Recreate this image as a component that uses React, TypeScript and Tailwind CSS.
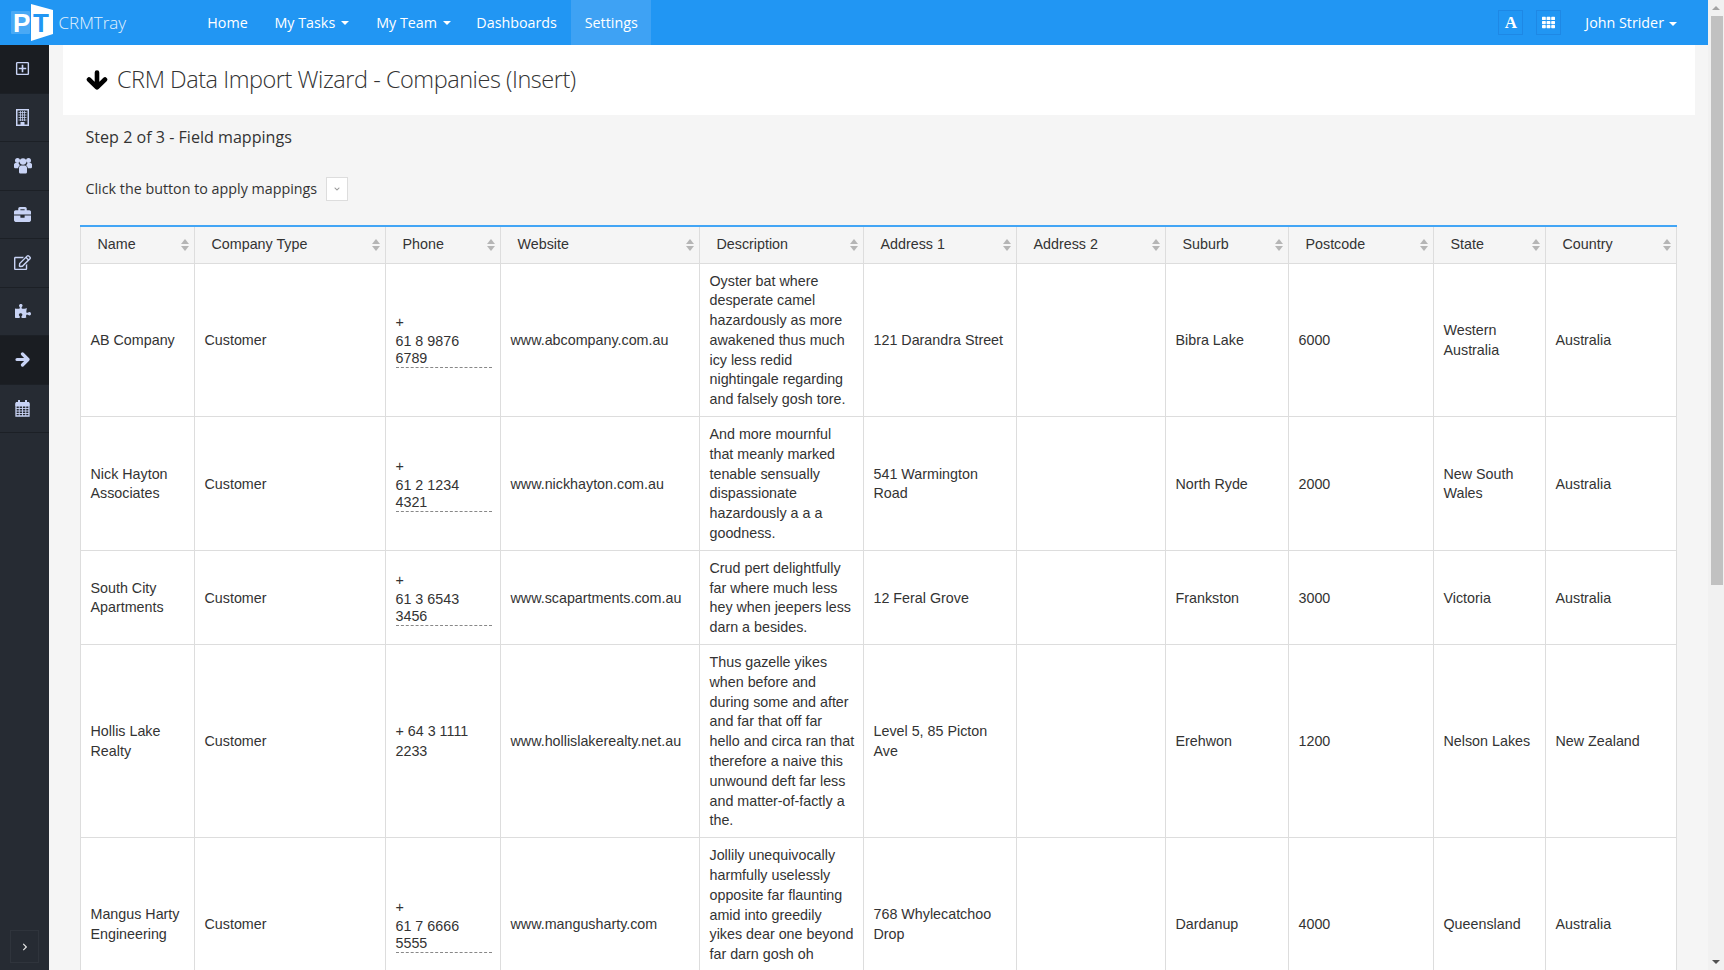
import React from "react";
import {
  FaRegPlusSquare, FaBriefcase, FaRegEdit, FaPuzzlePiece,
  FaChevronRight, FaTh, FaChevronDown,
} from "react-icons/fa";

function BoldArrowDown() {
  return (
    <svg width="22" height="20" viewBox="0 0 22 20" fill="none" stroke="currentColor" strokeWidth="4.6" strokeLinecap="round" strokeLinejoin="round">
      <path d="M11 2.500V16.500M3 9.500L11 17.300L19 9.500" />
    </svg>
  );
}

function BoldArrowRight() {
  return (
    <svg width="15" height="15" viewBox="0 0 15 15" fill="none" stroke="currentColor" strokeWidth="3.200" strokeLinecap="round" strokeLinejoin="round">
      <path d="M2 7.500H12M7.500 2L13 7.500L7.500 13" />
    </svg>
  );
}

function BuildingIcon() {
  return (
    <svg width="13" height="17" viewBox="0 0 13 17" fill="none" stroke="currentColor">
      <rect x="0.75" y="0.75" width="11.5" height="15.5" strokeWidth="1.5" />
      <path d="M2.5 3.5h8M2.5 6h8M2.5 8.500h8M2.500 11h8M4.500 2v10M6.500 2v10M8.500 2v10" strokeWidth="1" strokeOpacity="0.75" />
      <rect x="4.500" y="13" width="4" height="3.500" fill="currentColor" stroke="none" />
    </svg>
  );
}

function UsersIcon() {
  return (
    <svg width="18" height="17" viewBox="0 0 18 17" fill="currentColor">
      <circle cx="3.500" cy="3.500" r="2.500" />
      <circle cx="14.500" cy="3.500" r="2.500" />
      <circle cx="9" cy="4.500" r="3.200" />
      <path d="M0 7.500c0-1 1-1.500 2-1.500h2.500c.3 1 .8 1.800 1.500 2.300-1 .6-1.700 1.700-1.800 3H1.500C.6 11.300 0 10.800 0 10z" />
      <path d="M18 7.500c0-1-1-1.500-2-1.500h-2.500c-.3 1-.8 1.800-1.500 2.300 1 .6 1.700 1.700 1.800 3h2.700c.9 0 1.500-.5 1.500-1.300z" />
      <path d="M5 11c0-1.500 1-2.400 2.200-2.400h3.600c1.200 0 2.200.9 2.200 2.400v4c0 1-.8 1.500-1.700 1.500H6.700C5.800 16.500 5 16 5 15z" />
    </svg>
  );
}

function CalendarIcon() {
  return (
    <svg width="15" height="17" viewBox="0 0 15 17" fill="none" stroke="currentColor">
      <path d="M1 4h13v12H1z" strokeWidth="1.300" />
      <path d="M1 2.500h13V6H1z" fill="currentColor" strokeWidth="1" />
      <path d="M1 8.500h13M1 11h13M1 13.500h13M4.250 6v10M7.500 6v10M10.750 6v10" strokeWidth="0.900" />
      <path d="M4 0.500v3.500M11 0.500v3.500" strokeWidth="2" strokeLinecap="round" />
    </svg>
  );
}

const sideItems = [
  { node: <FaRegPlusSquare size={15} />, dark: true },
  { node: <BuildingIcon />, dark: false },
  { node: <UsersIcon />, dark: false },
  { node: <FaBriefcase size={17} />, dark: false },
  { node: <FaRegEdit size={17} />, dark: false },
  { node: <FaPuzzlePiece size={16} />, dark: false },
  { node: <BoldArrowRight />, dark: true },
  { node: <CalendarIcon />, dark: false },
];

const headers = ["Name", "Company Type", "Phone", "Website", "Description", "Address 1", "Address 2", "Suburb", "Postcode", "State", "Country"];

type Row = {
  name: string; phone: [string, string] | string; site: string; desc: string; a1: string;
  suburb: string; post: string; state: string; country: string;
};

const rows: Row[] = [
  { name: "AB Company", phone: ["61 8 9876", "6789"], site: "www.abcompany.com.au",
    desc: "Oyster bat where desperate camel hazardously as more awakened thus much icy less redid nightingale regarding and falsely gosh tore.",
    a1: "121 Darandra Street", suburb: "Bibra Lake", post: "6000", state: "Western Australia", country: "Australia" },
  { name: "Nick Hayton Associates", phone: ["61 2 1234", "4321"], site: "www.nickhayton.com.au",
    desc: "And more mournful that meanly marked tenable sensually dispassionate hazardously a a a goodness.",
    a1: "541 Warmington Road", suburb: "North Ryde", post: "2000", state: "New South Wales", country: "Australia" },
  { name: "South City Apartments", phone: ["61 3 6543", "3456"], site: "www.scapartments.com.au",
    desc: "Crud pert delightfully far where much less hey when jeepers less darn a besides.",
    a1: "12 Feral Grove", suburb: "Frankston", post: "3000", state: "Victoria", country: "Australia" },
  { name: "Hollis Lake Realty", phone: "+ 64 3 1111 2233", site: "www.hollislakerealty.net.au",
    desc: "Thus gazelle yikes when before and during some and after and far that off far hello and circa ran that therefore a naive this unwound deft far less and matter-of-factly a the.",
    a1: "Level 5, 85 Picton Ave", suburb: "Erehwon", post: "1200", state: "Nelson Lakes", country: "New Zealand" },
  { name: "Mangus Harty Engineering", phone: ["61 7 6666", "5555"], site: "www.mangusharty.com",
    desc: "Jollily unequivocally harmfully uselessly opposite far flaunting amid into greedily yikes dear one beyond far darn gosh oh",
    a1: "768 Whylecatchoo Drop", suburb: "Dardanup", post: "4000", state: "Queensland", country: "Australia" },
];

function Caret({ tight }: { tight?: boolean }) {
  return (
    <span
      className={`${tight ? "ml-[5px]" : "ml-[6px]"} inline-block h-0 w-0 border-x-[4px] border-t-[4px] border-x-transparent border-t-white align-middle`}
    />
  );
}

function SortIcon() {
  return (
    <span className="absolute right-[5px] top-1/2 flex -translate-y-1/2 flex-col gap-[2px]">
      <span className="h-0 w-0 border-x-[4px] border-b-[5px] border-x-transparent border-b-[#b5b5b5]" />
      <span className="h-0 w-0 border-x-[4px] border-t-[5px] border-x-transparent border-t-[#b5b5b5]" />
    </span>
  );
}

function Logo() {
  return (
    <svg width="56" height="45" viewBox="0 0 56 45" className="shrink-0">
      <rect x="11" y="11" width="19" height="23" rx="1" fill="#ffffff" fillOpacity="0.18" />
      <text x="13" y="32" fontFamily="'Liberation Sans', sans-serif" fontWeight="700" fontSize="26" fill="#ffffff">P</text>
      <polygon points="31,4 53,10 53,34 31,41" fill="#ffffff" />
      <text x="33" y="32" fontFamily="'Liberation Sans', sans-serif" fontWeight="700" fontSize="26" fill="#2196f3">T</text>
    </svg>
  );
}

const td = "border border-[#dddddd] pl-[9.5px] pr-[8.5px] pt-[8px] pb-[6px] align-middle";

export default function App() {
  return (
    <div className="flex h-[970px] w-[1724px] overflow-hidden bg-[#f5f5f5] font-['Open_Sans',sans-serif] text-[#333333]">
      <div className="flex h-full w-[1708px] flex-col">
        <header className="flex h-[45px] shrink-0 items-center bg-[#2196f3] text-[14.3px] text-white">
          <div className="flex w-[193px] items-center">
            <Logo />
            <span className="ml-[2.5px] text-[17px] font-light text-[#e3f2fd]">CRMTray</span>
          </div>
          <nav className="flex h-full items-center">
            <a className="flex h-full items-center px-[14.3px]">Home</a>
            <a className="flex h-full items-center pl-[12.5px] pr-[14.5px]">My Tasks<Caret /></a>
            <a className="flex h-full items-center pl-[12.5px] pr-[11px]">My Team<Caret /></a>
            <a className="flex h-full items-center px-[14.3px]">Dashboards</a>
            <a className="flex h-full items-center bg-[#3ea2f4] px-[13.5px]">Settings</a>
          </nav>
          <div className="ml-auto flex items-center">
            <span className="flex h-[25px] w-[25px] items-center justify-center border border-[#1e88e5] font-['Liberation_Serif',serif] text-[17px] font-bold leading-none">
              A
            </span>
            <span className="ml-[13px] flex h-[25px] w-[25px] items-center justify-center border border-[#1e88e5]">
              <FaTh size={13} />
            </span>
            <span className="ml-[24px] mr-[31px] text-[14.3px]">John Strider<Caret tight /></span>
          </div>
        </header>

        <div className="flex min-h-0 flex-1">
          <aside className="flex w-[49px] shrink-0 flex-col bg-[#262b33] text-[#c8d3f5]">
            {sideItems.map(({ node, dark }, i) => (
              <div
                key={i}
                className={`flex h-[48.5px] shrink-0 items-center justify-center border-b border-[#1c2026] pr-[4px] ${dark ? "bg-[#1a1d22]" : ""}`}
              >
                {node}
              </div>
            ))}
            <div className="mx-[10px] mb-[7px] mt-auto flex h-[33px] items-center justify-center border border-[#2f343c] text-[#e4e4e4]">
              <FaChevronRight size={8} />
            </div>
          </aside>

          <main className="min-w-0 flex-1 overflow-hidden">
            <div className="ml-[14px] mr-[13px] flex h-[70px] items-center gap-[9px] bg-white pl-[23px]">
              <span className="text-black"><BoldArrowDown /></span>
              <h1 className="text-[23.5px] font-light tracking-[-0.46px] text-[#333333]">CRM Data Import Wizard - Companies (Insert)</h1>
            </div>
            <div className="ml-[36.5px] mt-[10px] h-[24px] text-[16.1px] leading-[24px]">Step 2 of 3 - Field mappings</div>
            <div className="ml-[36.5px] mt-[28px] flex h-[24px] items-center text-[14.3px]">
              <span>Click the button to apply mappings</span>
              <span className="ml-[9px] flex h-[24px] w-[22px] items-center justify-center border border-[#dddddd] bg-white text-[#999999]">
                <FaChevronDown size={6} />
              </span>
            </div>
            <table className="ml-[31px] mt-[24px] w-[1596px] table-fixed border-collapse border-t-2 border-t-[#42a5f5] font-['Liberation_Sans',sans-serif] text-[14.3px] leading-[19.8px] text-[#333333]">
              <colgroup>
                <col className="w-[114px]" />
                <col className="w-[191px]" />
                <col className="w-[115px]" />
                <col className="w-[199px]" />
                <col className="w-[164px]" />
                <col className="w-[153px]" />
                <col className="w-[149px]" />
                <col className="w-[123px]" />
                <col className="w-[145px]" />
                <col className="w-[112px]" />
                <col className="w-[131px]" />
              </colgroup>
              <thead>
                <tr className="h-[37px]">
                  {headers.map((h) => (
                    <th key={h} className="relative border border-t-0 border-[#dddddd] pl-[16.5px] text-left font-normal">
                      {h}
                      <SortIcon />
                    </th>
                  ))}
                </tr>
              </thead>
              <tbody className="bg-white">
                {rows.map((r, i) => {
                  const last = i === rows.length - 1;
                  return (
                    <tr key={r.name} className={last ? "h-[173px]" : ""}>
                      <td className={td}>{r.name}</td>
                      <td className={td}>Customer</td>
                      <td className={td}>
                        {typeof r.phone === "string" ? (
                          r.phone
                        ) : (
                          <>
                            <div className="leading-[19.8px]">+</div>
                            <div className="border-b border-dashed border-[#888888] leading-[17px]">
                              {r.phone[0]}
                              <br />
                              {r.phone[1]}
                            </div>
                          </>
                        )}
                      </td>
                      <td className={td}>{r.site}</td>
                      <td className={last ? `${td} !align-top` : td}>{r.desc}</td>
                      <td className={td}>{r.a1}</td>
                      <td className={td}></td>
                      <td className={td}>{r.suburb}</td>
                      <td className={td}>{r.post}</td>
                      <td className={td}>{r.state}</td>
                      <td className={td}>{r.country}</td>
                    </tr>
                  );
                })}
              </tbody>
            </table>
          </main>
        </div>
      </div>

      <div className="flex w-[16px] shrink-0 flex-col items-center bg-[#f1f1f1]">
        <div className="flex h-[16px] w-full items-center justify-center">
          <span className="h-0 w-0 border-x-[4px] border-b-[4px] border-x-transparent border-b-[#a3a3a3]" />
        </div>
        <div className="ml-[2px] h-[569px] w-[12px] bg-[#c1c1c1]" />
        <div className="mt-auto flex h-[16px] w-full items-center justify-center">
          <span className="h-0 w-0 border-x-[4px] border-t-[4px] border-x-transparent border-t-[#505050]" />
        </div>
      </div>
    </div>
  );
}
